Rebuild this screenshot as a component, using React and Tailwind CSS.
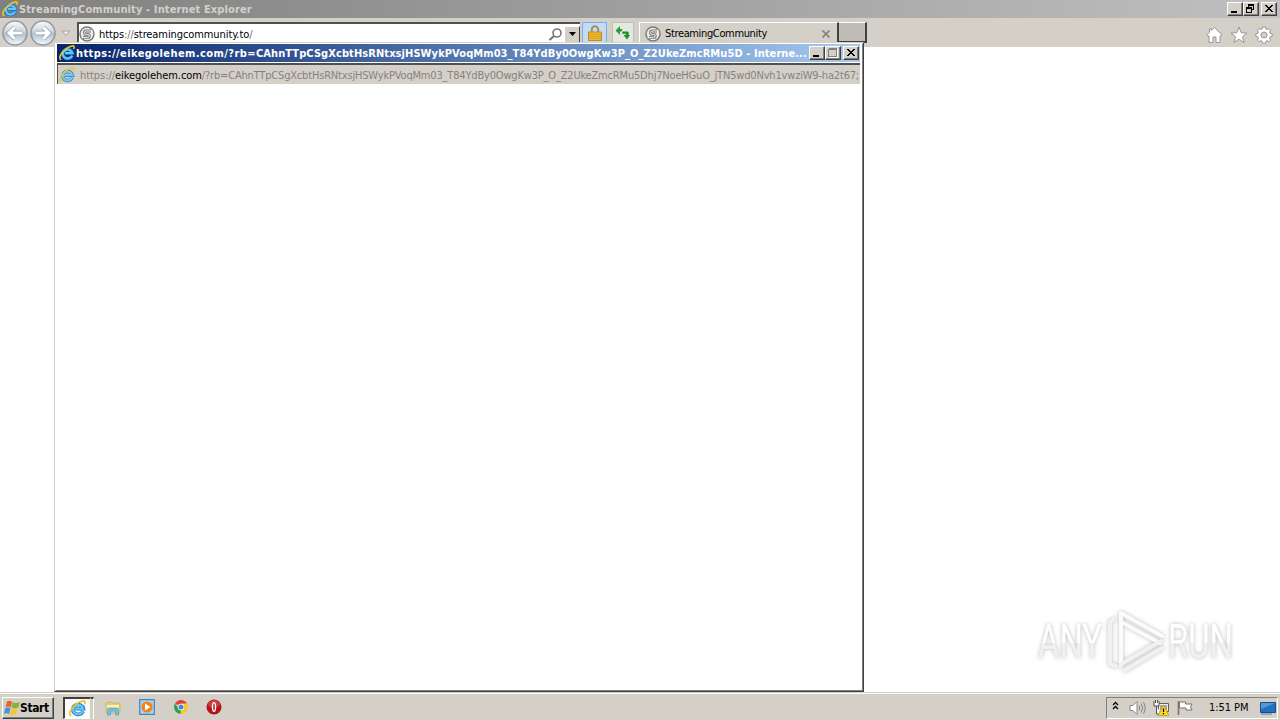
import React from "react";

const IeLogo = ({ className }) => (
  <svg className={className} viewBox="0 0 16 16">
    <path
      d="M13.300 10.600a5 4.600 0 1 1 .3-2.400H6"
      fill="none"
      stroke="#1f78cc"
      strokeWidth="3.4"
    />
    <path
      d="M13.100 10.600a4.800 4.400 0 1 1 .2-2.500H6"
      fill="none"
      stroke="#62c8f5"
      strokeWidth="2"
    />
    <path
      d="M2 15C-1 12.500 2.500 7 7 3.800 10.500 1.200 14.500.2 15 1.500c.3.800 0 1.700-.6 2.500"
      fill="none"
      stroke="#f0c322"
      strokeWidth="1.6"
    />
  </svg>
);

const SiteIcon = () => (
  <svg className="h-4 w-4 shrink-0" viewBox="0 0 16 16" fill="none">
    <circle cx="8" cy="8" r="7" fill="#ececec" stroke="#7c7c7c" strokeWidth="1.5" />
    <path
      d="M12 5H7.200a1.700 1.700 0 0 0 0 3.400h1.600a1.500 1.500 0 0 1 0 3H4"
      stroke="#777"
      strokeWidth="2.800"
    />
    <path
      d="M14 5H7.200a1.700 1.700 0 0 0 0 3.400h1.600a1.500 1.500 0 0 1 0 3H2.500"
      stroke="#f2f2f2"
      strokeWidth="1"
    />
  </svg>
);

const RoundArrow = ({ flip }) => (
  <svg
    className={flip ? "h-[26px] w-[26px] -scale-x-100" : "h-[26px] w-[26px]"}
    viewBox="0 0 26 26"
  >
    <defs>
      <linearGradient id="ball" x1="0" y1="0" x2="0" y2="1">
        <stop offset="0" stopColor="#fafbfc" />
        <stop offset=".4" stopColor="#d3d9df" />
        <stop offset=".55" stopColor="#b5c1cd" />
        <stop offset="1" stopColor="#f2fbff" />
      </linearGradient>
    </defs>
    <circle cx="13" cy="13" r="12" fill="url(#ball)" stroke="#939ba3" strokeWidth="1.600" />
    <path
      d="M12.800 7.200L7 13l5.800 5.800M7.500 13H20"
      fill="none"
      stroke="#8b9cae"
      strokeWidth="4.400"
    />
    <path
      d="M12.800 7.200L7 13l5.800 5.800M7.500 13H20"
      fill="none"
      stroke="#fff"
      strokeWidth="3"
    />
  </svg>
);

const WinButton = ({ kind, className = "" }) => (
  <button
    className={`flex h-[14px] w-4 shrink-0 items-center justify-center border border-t-white border-r-[#404040] border-b-[#404040] border-l-white bg-[#d4d0c8] shadow-[inset_-1px_-1px_0_#808080] ${className}`}
  >
    <svg className="h-3 w-[14px] shrink-0" viewBox="0 0 14 12" shapeRendering="crispEdges">
      {kind === "min" && <path d="M3 8h6v2H3z" />}
      {kind === "max" && (
        <g fill="none" stroke="#808080">
          <path d="M2.500 2v7.500h8V1.500h-8M2 2.500h9" />
          <path d="M3 10.500h8.500V2" stroke="#fff" />
        </g>
      )}
      {kind === "restore" && (
        <path d="M4 1h6v6H8V6h1V3H5v1H4zM2 4h6v6H2zM3 6v3h4V6z" fillRule="evenodd" />
      )}
      {kind === "close" && (
        <path d="M3 2h2v1h1v1h2V3h1V2h2v1h-1v1H9v1H8v1h1v1h1v1h1v1H9V8H8V7H6v1H5v1H3V8h1V7h1V6h1V5H5V4H4V3H3z" />
      )}
    </svg>
  </button>
);

const TitleBar = () => (
  <div className="flex h-[18px] shrink-0 items-center bg-linear-to-r from-[#808080] to-[#c0c0c0] pr-[3px] pl-[2px]">
    <IeLogo className="h-4 w-4" />
    <span className="ml-[1px] text-[11px] font-bold tracking-[0.12px] whitespace-nowrap text-[#d4d0c8]">
      StreamingCommunity - Internet Explorer
    </span>
    <div className="ml-auto flex">
      <WinButton kind="min" />
      <WinButton kind="restore" />
      <WinButton kind="close" className="ml-[2px]" />
    </div>
  </div>
);

const NavBar = () => (
  <div className="flex h-[29px] shrink-0 bg-[#d4d0c8]">
    <div className="flex h-[30px] items-center gap-[2px] pl-[2px]">
      <RoundArrow />
      <RoundArrow flip />
    </div>
    <svg className="mt-3 ml-[5px] h-[7px] w-[10px]" viewBox="0 0 10 7">
      <path d="M1 1h8L5 5.500z" fill="#e8e6e2" stroke="#aaa6a0" />
    </svg>
    <div className="mt-1 ml-[6px] flex h-[22px] w-[503px] items-center border-t-2 border-l-2 border-[#505050] bg-white">
      <SiteIcon />
      <span className="ml-1 text-[11px] tracking-[-0.09px]">
        https<span className="text-[#707070]">://</span>streamingcommunity.to
        <span className="text-[#707070]">/</span>
      </span>
      <svg className="ml-auto h-[15px] w-[15px]" viewBox="0 0 15 15" fill="none" stroke="#777">
        <circle cx="9" cy="6" r="4" strokeWidth="1.6" />
        <path d="M6 9l-4.500 4" strokeWidth="2.200" />
      </svg>
      <div className="ml-[1px] flex h-[17px] w-4 items-center justify-center border border-t-white border-r-[#404040] border-b-[#404040] border-l-white bg-[#d4d0c8]">
        <svg className="h-1 w-[7px]" viewBox="0 0 7 4">
          <path d="M0 0h7L3.500 4z" />
        </svg>
      </div>
    </div>
    <div className="mt-1 ml-[2px] flex h-[21px] w-[25px] justify-center border border-[#79aeea] bg-[#c5dbf5] pt-[2px]">
      <svg className="h-4 w-4" viewBox="0 0 16 16">
        <path d="M4.800 8V4.500a3.200 3.200 0 0 1 6.400 0V8" fill="none" stroke="#a0925c" strokeWidth="2" />
        <path d="M1.500 7h13v8.500h-13z" fill="#f0b92c" stroke="#c08a1c" />
        <path d="M2 9.500h12M2 11.500h12M2 13.500h12" stroke="#cf9a25" strokeWidth=".7" />
      </svg>
    </div>
    <div className="mt-1 ml-[5px] flex h-[21px] w-[22px] justify-center border border-[#b9c4b3] bg-[#e3e8e0] pt-[2px]">
      <svg className="h-[15px] w-4 shrink-0" viewBox="0 0 16 15">
        <path d="M.5 5.500L5 1v3h2.500l-1 2.500H5V10z" fill="#2f9a38" />
        <path d="M7.500 6.500h5.200q1 0 1 1V10H15l-3 4.500L8.500 10h2.200V8.800H7z" fill="#238d2c" />
      </svg>
    </div>
    <div className="mt-1 ml-[5px] flex h-[22px] w-[200px] items-center border-t border-r-2 border-l border-t-white border-r-[#404040] border-l-white pl-[5px]">
      <SiteIcon />
      <span className="ml-1 text-[11px] leading-[13px] tracking-[-0.36px]">StreamingCommunity</span>
      <svg className="mr-[7px] ml-auto h-2 w-2" viewBox="0 0 8 8">
        <path d="M.5 .5l7 7M7.500.5l-7 7" stroke="#858280" strokeWidth="1.700" />
      </svg>
    </div>
    <div className="mt-1 h-[21px] w-7 border-t border-r-2 border-b-2 border-t-white border-r-[#404040] border-b-[#404040] bg-[#bfbcb5]" />
    <div className="mr-[7px] ml-auto flex items-center gap-[7px]">
      <svg className="mt-[5px] h-[18px] w-[18px]" viewBox="0 0 18 18">
        <path
          d="M9.500 1.500l7.500 7.300-1 1.200H15v6.500h-4V11H8v5.500H4V10H3L2 8.800 4.500 6.300V3h2v1.400z"
          fill="#fff"
          stroke="#9a9792"
        />
      </svg>
      <svg className="mt-[5px] h-[18px] w-[18px]" viewBox="0 0 18 18">
        <path
          d="M9 1l2.200 5.700 5.800.4-4.500 3.700 1.600 5.800L9 13.300l-5.100 3.300 1.600-5.800L1 7.100l5.800-.4z"
          fill="#fff"
          stroke="#9a9792"
        />
      </svg>
      <svg className="mt-[5px] h-[18px] w-[18px]" viewBox="0 0 18 18">
        <path
          d="M7.500 1h3l.4 2 1.300.6 1.800-1.100 1.700 1.700-1.100 1.800.6 1.400 2 .4v2.600l-2 .4-.6 1.400 1.100 1.800-1.700 1.700-1.800-1.100-1.300.6-.4 2h-3l-.4-2-1.300-.6L4 15.700 2.300 14l1.100-1.800-.6-1.400-2-.4V7.800l2-.4.6-1.400-1.100-1.800L4 2.500l1.800 1.100L7.100 3zM9 6a3 3 0 1 0 0 6 3 3 0 1 0 0-6z"
          fill="#fff"
          fillRule="evenodd"
          stroke="#9a9792"
        />
      </svg>
    </div>
  </div>
);

const Popup = () => (
  <div className="absolute top-[42px] left-[54px] flex h-[650px] w-[810px] flex-col border border-t-[#d4d0c8] border-r-[#404040] border-b-[#404040] border-l-[#d4d0c8] bg-white">
    <div className="flex min-h-0 flex-1 flex-col border border-t-white border-r-[#808080] border-b-[#808080] border-l-white pr-[2px] pb-[1px] pl-[1px]">
      <div className="flex h-[18px] shrink-0 items-center bg-linear-to-r from-[#0a246a] to-[#a6caf0] pl-[2px]">
        <IeLogo className="h-4 w-4 shrink-0" />
        <span className="ml-[1px] w-[732px] shrink-0 pt-[2px] text-[11px] leading-4 font-bold tracking-[0.08px] whitespace-nowrap text-white">
          <span className="tracking-[0.42px]">https://eikegolehem.com/?rb=</span>
          CAhnTTpCSgXcbtHsRNtxsjHSWykPVoqMm03_T84YdBy0OwgKw3P_O_Z2UkeZmcRMu5D - Interne...
        </span>
        <div className="ml-auto flex pr-[1px]">
          <WinButton kind="min" />
          <WinButton kind="max" />
          <WinButton kind="close" className="ml-[2px]" />
        </div>
      </div>
      <div className="mt-[1px] flex h-[21px] shrink-0 items-center border-t-2 border-l border-[#505050] bg-[#d4d0c8] pl-[1px]">
        <IeLogo className="h-4 w-4 shrink-0 opacity-80" />
        <span className="ml-[5px] pt-[2px] text-[11px] leading-4 tracking-[-0.18px] whitespace-nowrap text-[#85827d]">
          <span className="tracking-[-0.06px]">https://</span>
          <span className="tracking-[-0.06px] text-black">eikegolehem.com</span>
          /?rb=CAhnTTpCSgXcbtHsRNtxsjHSWykPVoqMm03_T84YdBy0OwgKw3P_O_Z2UkeZmcRMu5Dhj7NoeHGuO_jTN5wd0Nvh1vwziW9-ha2t67;
        </span>
      </div>
    </div>
  </div>
);

const Watermark = () => (
  <svg
    className="absolute top-[604px] left-[1030px] h-[74px] w-[230px] drop-shadow-[0_0_2px_#bbb]"
    viewBox="0 0 230 74"
  >
    <defs>
      <linearGradient id="mark" x1="0" y1="0" x2="0" y2="1">
        <stop offset=".52" stopColor="#fff" />
        <stop offset=".52" stopColor="#f1f1f1" />
      </linearGradient>
    </defs>
    <g fill="url(#mark)" fontFamily="Roboto, sans-serif" fontSize="48" fontWeight="400">
      <text x="8" y="54" textLength="64" lengthAdjust="spacingAndGlyphs">ANY</text>
      <text x="138" y="54" textLength="65" lengthAdjust="spacingAndGlyphs">RUN</text>
    </g>
    <g fill="none" stroke="#fbfbfb" strokeWidth="4" strokeLinejoin="round" strokeLinecap="round">
      <path d="M91 61V9l41 23" />
      <path d="M91 18l39 21" />
      <path d="M84 15l-4 3v42l6 2M91 60l40-23M95 66l37-22" stroke="#f1f1f1" />
    </g>
  </svg>
);

const Taskbar = () => (
  <div className="flex h-7 shrink-0 items-center border-t border-[#d4d0c8] bg-[#d4d0c8] shadow-[inset_0_1px_0_#fff]">
    <button className="mt-[2px] ml-[2px] flex h-[22px] w-[52px] items-center border border-t-white border-r-[#404040] border-b-[#404040] border-l-white pl-[1px] shadow-[inset_-1px_-1px_0_#808080]">
      <svg className="h-4 w-4 shrink-0" viewBox="0 0 16 16">
        <path d="M3 1.500q2.500-1.500 5.200.2L6.800 7.300q-2.500-1.500-5.300 0z" fill="#e9632b" />
        <path d="M8.800 2.200q3 1.600 7-.2L14.300 7.700q-3.500 1.500-6.800 0z" fill="#83b43c" />
        <path d="M1.200 8.200q2.800-1.500 5.300 0L5 14q-2.500-1.500-5 0z" fill="#4693d5" />
        <path d="M7.300 8.700q3.300 1.500 6.700.2L12.400 14.500q-3.500 1.300-6.700-.3z" fill="#f6c63a" />
      </svg>
      <span className="text-[12px] font-bold tracking-[-0.4px]">Start</span>
    </button>
    <div className="mt-[2px] ml-[9px] flex h-[22px] w-[28px] items-center justify-center border-t-2 border-r border-b border-l-2 border-t-[#404040] border-r-[#d4d0c8] border-b-white border-l-[#404040] bg-[#fbfaf8]">
      <IeLogo className="h-[17px] w-[17px]" />
    </div>
    <div className="mt-[2px] h-[22px] w-[3px] border-t-2 border-r border-t-[#404040] border-r-white" />
    <svg className="mt-[2px] ml-[11px] h-4 w-4" viewBox="0 0 16 16">
      <path d="M1 3l5-1 1 1h7l1 2v8H1z" fill="#e9cf72" stroke="#c6a747" strokeWidth=".6" />
      <path d="M2 5h12v4H2z" fill="#fbf0b1" />
      <path
        d="M2.500 15V9.500q0-1.500 1.500-1.500h8q1.500 0 1.500 1.500V15h-3v-4h-5v4z"
        fill="#72bfe7"
        stroke="#4b96c5"
        strokeWidth=".6"
      />
    </svg>
    <svg className="mt-[1px] ml-[18px] h-4 w-4" viewBox="0 0 16 16">
      <path d="M.7 .7h14.600v14.600H.7z" fill="#a6d2f0" stroke="#3f87c2" strokeWidth="1.200" />
      <circle cx="8" cy="8" r="5.600" fill="#f18415" />
      <path d="M6 4.500v7L11.500 8z" fill="#fff" />
    </svg>
    <svg className="mt-[1px] ml-[19px] h-[14px] w-[14px]" viewBox="0 0 14 14">
      <path d="M7 7L1 3.500A7 7 0 0 1 13 3.500z" fill="#df4236" />
      <path d="M7 7H3.500L1 3.500A7 7 0 0 0 6.500 14L10 9z" fill="#2ca251" />
      <path d="M7 7V3.500h6A7 7 0 0 1 6.500 14z" fill="#fbc927" />
      <circle cx="7" cy="7" r="3.200" fill="#fff" />
      <circle cx="7" cy="7" r="2.500" fill="#4584dc" />
    </svg>
    <svg className="mt-[1px] ml-[18px] h-4 w-4" viewBox="0 0 16 16">
      <circle cx="8" cy="8" r="7.500" fill="#b3131b" />
      <ellipse cx="8" cy="5" rx="6" ry="4" fill="#db5757" opacity=".6" />
      <ellipse cx="8" cy="8" rx="2.200" ry="5" fill="#fff" />
      <ellipse cx="8" cy="8" rx=".8" ry="3.700" fill="#b3131b" />
    </svg>
    <div className="mt-[2px] mr-[2px] ml-auto flex h-[22px] w-[172px] items-center border border-t-[#808080] border-r-white border-b-white border-l-[#808080] pl-[5px]">
      <svg className="mb-1 h-[9px] w-[7px]" viewBox="0 0 7 9" fill="none" stroke="#000" strokeWidth="1.300">
        <path d="M1 4l2.500-2.500L6 4M1 8l2.500-2.500L6 8" />
      </svg>
      <svg className="ml-[10px] h-4 w-[17px]" viewBox="0 0 17 16" fill="none" stroke="#8a8681">
        <path d="M1 5.500h3l4-4v13l-4-4H1z" fill="#fff" />
        <path d="M10 5.500q1.500 2.500 0 5M12.200 3.500q3 4.500 0 9M14.400 2q3.500 6 0 12" />
      </svg>
      <svg className="ml-[7px] h-4 w-4" viewBox="0 0 16 16">
        <path d="M5.500 3.500h10v8h-10z" fill="#eee" stroke="#64615d" />
        <path d="M7 5h7v5H7z" fill="#aaa6a1" />
        <path d="M1 1v5h5V1M2.500 0v3M4.500 0v3M3.500 6v8H8" fill="#fff" stroke="#504d49" />
        <path d="M10.500 5L16 15.500H5z" fill="#ffd71f" stroke="#ae8c12" strokeWidth=".6" />
        <path d="M10.500 8.500v3.500M10.500 13v1.300" stroke="#000" strokeWidth="1.200" />
      </svg>
      <svg className="ml-[8px] h-4 w-4" viewBox="0 0 16 16">
        <path d="M1.500 1v14" stroke="#77736e" strokeWidth="1.600" />
        <path d="M2.500 2h6v2H15l-1.500 3L15 10H9V8H2.500z" fill="#fff" stroke="#77736e" />
      </svg>
      <span className="ml-[16px] text-[11px] tracking-[-0.05px] whitespace-nowrap">1:51 PM</span>
      <svg className="mr-[1px] ml-auto h-[14px] w-4" viewBox="0 0 16 14">
        <path d="M.5 1.500h15v10H.5z" fill="#2371c4" stroke="#184c89" />
        <path d="M1 2h14L1 8z" fill="#5798d9" />
        <path d="M1 13h11" stroke="#5c7796" />
      </svg>
    </div>
  </div>
);

const App = () => {
  return (
    <div className="relative flex h-[720px] w-[1280px] flex-col overflow-hidden bg-white font-['DejaVu_Sans_Condensed','DejaVu_Sans',sans-serif] leading-none text-black">
      <TitleBar />
      <NavBar />
      <div className="flex-1 bg-white" />
      <Taskbar />
      <Popup />
      <Watermark />
    </div>
  );
};

export default App;
